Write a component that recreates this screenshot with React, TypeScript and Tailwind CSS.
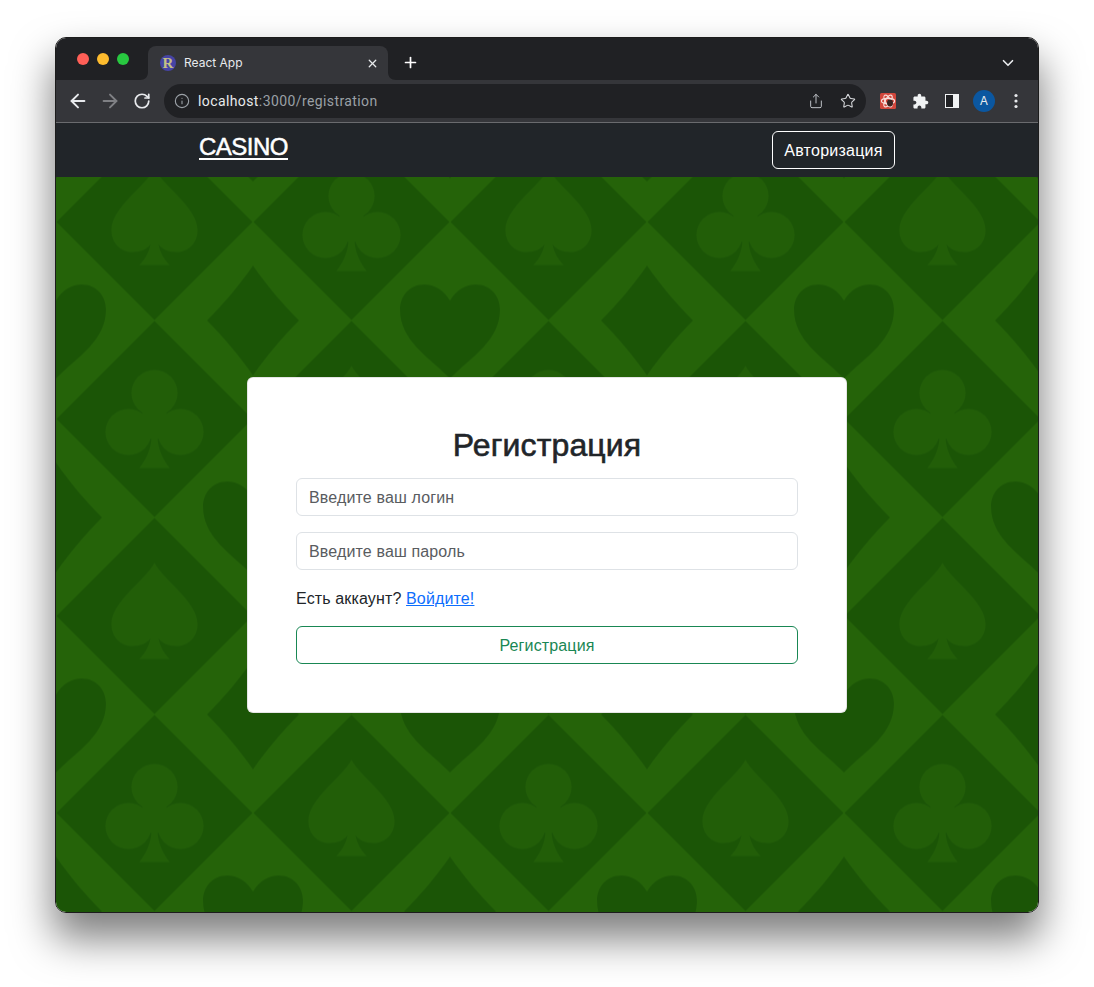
import { ArrowLeft, ArrowRight, ChevronDown, Info, Plus, RotateCw, Share, Star, X } from 'lucide-react'

const spade =
  'M0 -53 C-10 -35 -43 -14 -43 8 C-43 22 -33 30 -22 30 C-14 30 -7 27 -4 22 C-5 30 -10 38 -15 43 L15 43 C10 38 5 30 4 22 C7 27 14 30 22 30 C33 30 43 22 43 8 C43 -14 10 -35 0 -53 Z'
const heart =
  'M0 -20 C-6 -30 -15 -36 -26 -36 C-40 -36 -50 -25 -50 -11 C-50 20 -22 36 0 58 C22 36 50 20 50 -11 C50 -25 40 -36 26 -36 C15 -36 6 -30 0 -20 Z'
const diamond = 'M0 -55 C13 -36 30 -16 46 0 C30 16 13 36 0 55 C-13 36 -30 16 -46 0 C-30 -16 -13 -36 0 -55 Z'

const Club = ({ x, y }: { x: number; y: number }) => (
  <g transform={`translate(${x} ${y})`} fill="#225e08">
    <circle cx="0" cy="-26" r="23" />
    <circle cx="-26" cy="13" r="23" />
    <circle cx="26" cy="13" r="23" />
    <path d="M-12 -10 L12 -10 L12 16 L3 20 C4 32 9 41 15 49 L-15 49 C-9 41 -4 32 -3 20 L-12 16 Z" />
  </g>
)

const Dark = ({ x, y }: { x: number; y: number }) => (
  <polygon
    points={`${x},${y - 98} ${x + 98},${y} ${x},${y + 98} ${x - 98},${y}`}
    fill="#1b5506"
  />
)

const Suit = ({ d, x, y, fill }: { d: string; x: number; y: number; fill: string }) => (
  <path d={d} transform={`translate(${x} ${y})`} fill={fill} />
)

const Felt = () => (
  <svg className="absolute inset-0 h-full w-full" aria-hidden="true">
    <defs>
      <pattern
        id="felt"
        width="394"
        height="394"
        patternUnits="userSpaceOnUse"
        patternTransform="translate(0 -53.5)"
      >
        <rect width="394" height="394" fill="#256309" />
        <Dark x={98.5} y={98.5} />
        <Dark x={295.5} y={98.5} />
        <Dark x={98.5} y={295.5} />
        <Dark x={295.5} y={295.5} />
        <Suit d={spade} x={98.5} y={98.5} fill="#225e08" />
        <Club x={295.5} y={98.5} />
        <Club x={98.5} y={295.5} />
        <Suit d={spade} x={295.5} y={295.5} fill="#225e08" />
        <Suit d={heart} x={0} y={197} fill="#1b5506" />
        <Suit d={heart} x={394} y={197} fill="#1b5506" />
        <Suit d={diamond} x={197} y={197} fill="#1b5506" />
        <Suit d={diamond} x={0} y={0} fill="#1b5506" />
        <Suit d={diamond} x={394} y={0} fill="#1b5506" />
        <Suit d={diamond} x={0} y={394} fill="#1b5506" />
        <Suit d={diamond} x={394} y={394} fill="#1b5506" />
        <Suit d={heart} x={197} y={0} fill="#1b5506" />
        <Suit d={heart} x={197} y={394} fill="#1b5506" />
      </pattern>
    </defs>
    <rect width="100%" height="100%" fill="url(#felt)" />
  </svg>
)

const TabBar = () => (
  <div className="flex h-[42px] shrink-0 bg-[#202124] pt-2">
    <div className="flex items-center gap-2 pb-2 pl-[21px] pr-[19px]">
      <span className="h-3 w-3 rounded-full bg-[#ff5f57]" />
      <span className="h-3 w-3 rounded-full bg-[#febc2e]" />
      <span className="h-3 w-3 rounded-full bg-[#28c840]" />
    </div>
    <div className="relative flex h-[34px] w-[240px] items-center rounded-t-lg bg-[#35363a] pl-3 pr-[9px]">
      <svg className="absolute bottom-0 -left-2 h-2 w-2" viewBox="0 0 8 8">
        <path d="M8 0 V8 H0 C5 8 8 5 8 0 Z" fill="#35363a" />
      </svg>
      <svg className="absolute bottom-0 -right-2 h-2 w-2" viewBox="0 0 8 8">
        <path d="M0 0 V8 H8 C3 8 0 5 0 0 Z" fill="#35363a" />
      </svg>
      <span className="flex h-4 w-4 items-center justify-center rounded-full bg-[#4644a4] font-['Liberation_Serif',serif] text-[15px] font-bold leading-none text-[#c4c084]">
        R
      </span>
      <span className="ml-2 flex-1 font-['Inter',sans-serif] text-xs text-[#e8eaed]">React App</span>
      <X size={13} strokeWidth={2.4} className="text-[#e8eaed]" />
    </div>
    <div className="flex flex-1 items-start justify-between pr-[21px]">
      <Plus size={17} strokeWidth={2.4} className="ml-3.5 mt-2 text-white" />
      <ChevronDown size={18} strokeWidth={2.2} className="mt-2 text-[#e8eaed]" />
    </div>
  </div>
)

const ToolbarButton = ({ children }: { children: React.ReactNode }) => (
  <div className="flex h-8 w-8 shrink-0 items-center justify-center text-[#e8eaed]">{children}</div>
)

const ExtensionIcon = () => (
  <svg width="16" height="16" viewBox="0 0 16 16">
    <rect width="16" height="16" rx="1.5" fill="#d2473c" />
    <g fill="none" stroke="#f8dfdb" strokeWidth="1.2">
      <ellipse cx="8" cy="8" rx="6.6" ry="2.7" />
      <ellipse cx="8" cy="8" rx="6.6" ry="2.7" transform="rotate(60 8 8)" />
      <ellipse cx="8" cy="8" rx="6.6" ry="2.7" transform="rotate(120 8 8)" />
    </g>
    <ellipse cx="10" cy="10" rx="3" ry="3.4" fill="#3a2422" />
  </svg>
)

const ExtensionsPuzzle = () => (
  <svg width="17" height="17" viewBox="0 0 24 24" fill="#f1f3f4">
    <path d="M20.5 11H19V7c0-1.1-.9-2-2-2h-4V3.5C13 2.12 11.88 1 10.5 1S8 2.12 8 3.5V5H4c-1.1 0-1.99.9-1.99 2v3.8H3.5c1.49 0 2.7 1.21 2.7 2.7s-1.21 2.7-2.7 2.7H2V20c0 1.1.9 2 2 2h3.8v-1.5c0-1.49 1.21-2.7 2.7-2.7 1.49 0 2.7 1.21 2.7 2.7V22H17c1.1 0 2-.9 2-2v-4h1.5c1.38 0 2.5-1.12 2.5-2.5S21.88 11 20.5 11z" />
  </svg>
)

const MenuDots = () => (
  <svg width="4" height="16" viewBox="0 0 4 16" fill="#e8eaed">
    <circle cx="2" cy="2.5" r="1.6" />
    <circle cx="2" cy="8" r="1.6" />
    <circle cx="2" cy="13.5" r="1.6" />
  </svg>
)

const Toolbar = () => (
  <div className="flex h-[43px] shrink-0 border-b border-[#6a6b6e] bg-[#35363a] pb-px pl-1.5">
    <div className="flex h-[42px] items-center">
      <ToolbarButton>
        <ArrowLeft size={22} strokeWidth={2.1} />
      </ToolbarButton>
      <ToolbarButton>
        <ArrowRight size={22} strokeWidth={2.1} className="text-[#7f8084]" />
      </ToolbarButton>
      <ToolbarButton>
        <RotateCw size={18} strokeWidth={2.3} />
      </ToolbarButton>
      <div className="ml-1.5 flex h-[34px] w-[702px] items-center rounded-full bg-[#202124] pl-2.5 pr-0.5">
        <Info size={16} strokeWidth={1.7} className="text-[#9aa0a6]" />
        <span className="ml-2 flex-1 font-['Roboto',sans-serif] text-sm tracking-[0.4px] text-[#9aa0a6]">
          <span className="text-[#e8eaed]">localhost</span>:3000/registration
        </span>
        <ToolbarButton>
          <Share size={16} strokeWidth={1.5} className="text-[#bdc1c6]" />
        </ToolbarButton>
        <ToolbarButton>
          <Star size={16} strokeWidth={1.6} className="text-[#d5d7da]" />
        </ToolbarButton>
      </div>
      <div className="ml-1.5 flex items-center">
        <ToolbarButton>
          <ExtensionIcon />
        </ToolbarButton>
        <ToolbarButton>
          <ExtensionsPuzzle />
        </ToolbarButton>
        <ToolbarButton>
          <span className="h-3.5 w-3.5 border-[1.5px] border-r-[6px] border-[#f1f3f4] bg-[#202124]" />
        </ToolbarButton>
        <ToolbarButton>
          <span className="flex h-[22px] w-[22px] items-center justify-center rounded-full bg-[#0b57a0] font-['Inter',sans-serif] text-xs text-[#e8eaed]">
            A
          </span>
        </ToolbarButton>
        <ToolbarButton>
          <MenuDots />
        </ToolbarButton>
      </div>
    </div>
  </div>
)

const Navbar = () => (
  <nav className="flex h-[54px] shrink-0 items-start justify-between bg-[#212529] px-[143px] pt-2 font-['Liberation_Sans',sans-serif] text-white">
    <a href="#" className="text-2xl tracking-[-0.5px] underline decoration-2 underline-offset-[3px] [-webkit-text-stroke:0.5px_white]">
      CASINO
    </a>
    <button className="h-[38px] w-[123px] rounded-md border border-white pt-px text-base tracking-[0.25px]">
      Авторизация
    </button>
  </nav>
)

const Registration = () => (
  <main className="relative flex flex-1 items-center justify-center">
    <Felt />
    <div className="relative flex w-[600px] flex-col rounded-md border border-black/10 bg-white p-12 font-['Liberation_Sans',sans-serif] tracking-[0.14px] text-[#212529]">
      <h2 className="mb-[14px] text-center text-[32px] leading-[38px] [-webkit-text-stroke:0.6px_#212529]">
        Регистрация
      </h2>
      <input
        className="h-[38px] rounded-md border border-[#dee2e6] px-3 pt-[2px] text-base placeholder:text-[#595c5f]"
        placeholder="Введите ваш логин"
      />
      <input
        className="mt-4 h-[38px] rounded-md border border-[#dee2e6] px-3 pt-[2px] text-base placeholder:text-[#595c5f]"
        placeholder="Введите ваш пароль"
      />
      <p className="mt-[18px] text-base leading-[22px]">
        Есть аккаунт?{' '}
        <a href="#" className="text-[#0d6efd] underline">
          Войдите!
        </a>
      </p>
      <button className="mt-4 h-[38px] rounded-md border border-[#198754] pt-[2px] text-base text-[#198754]">
        Регистрация
      </button>
    </div>
  </main>
)

const App = () => (
  <div className="h-[987px] w-[1094px] overflow-hidden bg-white pl-[55px] pt-[37px]">
    <div className="flex h-[876px] w-[984px] flex-col overflow-hidden rounded-[11px] border border-[#1c1c1c] shadow-[0_24px_40px_2px_rgba(0,0,0,0.5)]">
      <TabBar />
      <Toolbar />
      <Navbar />
      <Registration />
    </div>
  </div>
)

export default App
